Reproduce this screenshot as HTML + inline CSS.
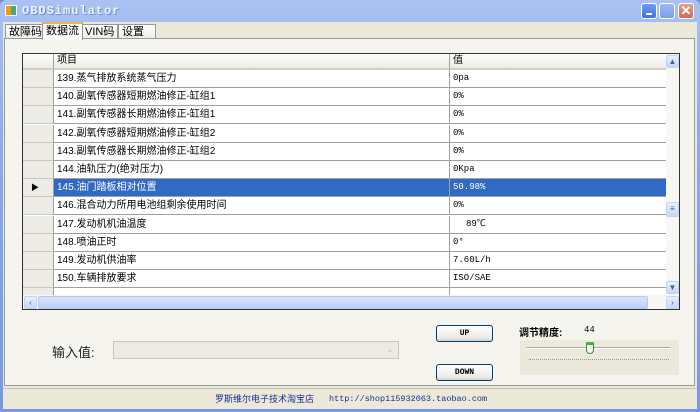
<!DOCTYPE html>
<html><head><meta charset="utf-8"><style>
*{margin:0;padding:0;box-sizing:border-box}
body{width:700px;height:412px;overflow:hidden;background:#6b8fd8;font-family:"Liberation Sans","Noto Sans CJK SC",sans-serif;position:relative}
.win{position:absolute;left:0;top:0;width:700px;height:412px;background:linear-gradient(#a9c2f2,#8eaeee 30%,#7d9fe8 70%,#7899e0);border-radius:6px 6px 0 0}
.title{position:absolute;left:22px;top:4px;color:#eef3ff;font:bold 12px "Liberation Mono",monospace;letter-spacing:1px;text-shadow:1px 1px #6d8bd0}
.ico{position:absolute;left:5px;top:5px;width:12px;height:11px;background:linear-gradient(90deg,#f90 50%,#4a8 50%);border:1px solid #fff}
.tb{position:absolute;top:3px;width:16px;height:16px;border:1px solid #fff;border-radius:3px}
.client{position:absolute;left:3px;top:22px;width:694px;height:387px;background:#ece9d8}
.tabs{position:absolute;left:0;top:0;height:16px;width:694px}
.tab{position:absolute;top:2px;height:15px;border:1px solid #919b9c;border-bottom:none;background:linear-gradient(#fff,#ecebe6);font-size:11px;padding:0 3px;line-height:14px;color:#000}
.page{position:absolute;left:1px;top:16px;width:691px;height:348px;background:#f5f4ef;border:1px solid #919b9c}
.grid{position:absolute;left:17px;top:14px;width:658px;height:257px;border:1px solid #333;background:#fff;overflow:hidden}
.row{position:absolute;left:0;height:18px;width:643px;font-size:10px;line-height:17px}
.rh{position:absolute;left:0;top:0;width:31px;height:18px;background:#ecebe6;border-right:1px solid #a0a0a0;border-bottom:1px solid #c8c8c0}
.c1{position:absolute;left:31px;top:0;width:396px;height:18px;border-right:1px solid #a0a0a0;border-bottom:1px solid #a0a0a0;padding-left:3px}
.c2{position:absolute;left:427px;top:0;width:216px;height:18px;border-bottom:1px solid #a0a0a0;padding-left:3px;font-family:"Liberation Mono","Noto Sans CJK SC",monospace;font-size:9px}
.hdr .c1,.hdr .c2,.hdr .rh{background:linear-gradient(#fff,#ecebe6);border-bottom:2px solid #d0cfc7}
.hdr .c2{font-family:"Liberation Sans","Noto Sans CJK SC",sans-serif;font-size:10px}
.sel .c1,.sel .c2{background:#316ac5;color:#fff}
.vs{position:absolute;left:643px;top:0;width:14px;height:241px;background:#f7f7f3}
.hs{position:absolute;left:0;top:241px;width:657px;height:15px;background:#f7f7f3}
.sb{position:absolute;width:13px;height:13px;background:linear-gradient(#e8effd,#c6d7fa);border:1px solid #c3d3f3;border-radius:2px;font-size:8px;color:#4d6185;text-align:center;line-height:11px}
.btn{position:absolute;width:57px;height:17px;border:1px solid #003c74;border-radius:3px;background:linear-gradient(#fff,#ecebe6 80%,#d6d0c5);font:bold 8px "Liberation Mono",monospace;text-align:center;line-height:15px}
.status{position:absolute;left:0;top:366px;width:694px;height:21px;border-top:1px solid #c5c2b2;font-size:9px;color:#1a2a9a;line-height:20px}
</style></head><body>
<div class="win">
<div class="ico"></div><div class="title">OBDSimulator</div>
<div class="tb" style="left:641px;background:linear-gradient(#6d9cf2,#4173e0)"><div style="position:absolute;left:4px;top:9px;width:6px;height:2px;background:#fff"></div></div>
<div class="tb" style="left:659px;background:linear-gradient(#9dbaf3,#7e9fe8)"></div>
<div class="tb" style="left:678px;background:linear-gradient(#e9a08a,#d16a50);color:#fff;font:bold 13px sans-serif;text-align:center;line-height:14px">✕</div>
<div class="client">
<div class="tabs">
<div class="tab" style="left:2px">故障码</div>
<div class="tab" style="left:39px;top:0;height:18px;background:#fcfcfe;border-top:2px solid #f6b23a;z-index:2">数据流</div>
<div class="tab" style="left:78px">VIN码</div>
<div class="tab" style="left:115px;width:38px">设置</div>
</div>
<div class="page">
<div class="grid">
<div class="row hdr" style="top:0;height:16px"><div class="rh" style="height:16px"></div><div class="c1" style="height:16px;line-height:14px">项目</div><div class="c2" style="height:16px;line-height:14px">值</div></div>
<div class="row" style="top:16px"><div class="rh"></div><div class="c1">139.蒸气排放系统蒸气压力</div><div class="c2">0pa</div></div>
<div class="row" style="top:34.2px"><div class="rh"></div><div class="c1">140.副氧传感器短期燃油修正-缸组1</div><div class="c2">0%</div></div>
<div class="row" style="top:52.4px"><div class="rh"></div><div class="c1">141.副氧传感器长期燃油修正-缸组1</div><div class="c2">0%</div></div>
<div class="row" style="top:70.6px"><div class="rh"></div><div class="c1">142.副氧传感器短期燃油修正-缸组2</div><div class="c2">0%</div></div>
<div class="row" style="top:88.8px"><div class="rh"></div><div class="c1">143.副氧传感器长期燃油修正-缸组2</div><div class="c2">0%</div></div>
<div class="row" style="top:107px"><div class="rh"></div><div class="c1">144.油轨压力(绝对压力)</div><div class="c2">0Kpa</div></div>
<div class="row sel" style="top:125.2px"><div class="rh" style="font-size:8px;padding-left:8px">▶</div><div class="c1">145.油门踏板相对位置</div><div class="c2">50.98%</div></div>
<div class="row" style="top:143.4px"><div class="rh"></div><div class="c1">146.混合动力所用电池组剩余使用时间</div><div class="c2">0%</div></div>
<div class="row" style="top:161.6px"><div class="rh"></div><div class="c1">147.发动机机油温度</div><div class="c2" style="padding-left:16px">89℃</div></div>
<div class="row" style="top:179.8px"><div class="rh"></div><div class="c1">148.喷油正时</div><div class="c2">0°</div></div>
<div class="row" style="top:198px"><div class="rh"></div><div class="c1">149.发动机供油率</div><div class="c2">7.60L/h</div></div>
<div class="row" style="top:216.2px"><div class="rh"></div><div class="c1">150.车辆排放要求</div><div class="c2">ISO/SAE</div></div>
<div class="row" style="top:234.4px"><div class="rh"></div><div class="c1"></div><div class="c2"></div></div>
<div class="vs"><div class="sb" style="left:0;top:1px">▲</div><div class="sb" style="left:0;top:148px;height:15px">≡</div><div class="sb" style="left:0;top:227px">▼</div></div>
<div class="hs"><div class="sb" style="left:1px;top:1px">‹</div><div style="position:absolute;left:15px;top:1px;width:610px;height:13px;background:linear-gradient(#d6e2fa,#bfd2f7);border:1px solid #b6c9ef;border-radius:2px"></div><div class="sb" style="left:643px;top:1px">›</div></div>
</div>
<div style="position:absolute;left:47px;top:303px;font-size:13px;color:#222">输入值:</div>
<div style="position:absolute;left:108px;top:302px;width:286px;height:18px;background:#ecebe3;border:1px solid #c9c7ba"><div style="position:absolute;right:1px;top:1px;width:14px;height:14px;color:#bbb;font-size:8px;text-align:center;line-height:14px">⌄</div></div>
<div class="btn" style="left:431px;top:286px">UP</div>
<div class="btn" style="left:431px;top:325px">DOWN</div>
<div style="position:absolute;left:514px;top:285px;font-size:10px;font-weight:bold">调节精度:</div>
<div style="position:absolute;left:579px;top:286px;font:9px 'Liberation Mono',monospace">44</div>
<div style="position:absolute;left:515px;top:301px;width:159px;height:35px;background:#ebe9dc">
<div style="position:absolute;left:6px;top:7px;width:145px;height:2px;background:#fff;border-top:1px solid #aaa"></div>
<div style="position:absolute;left:9px;top:19px;width:140px;height:2px;border-top:1px dotted #999"></div>
<div style="position:absolute;left:66px;top:2px;width:8px;height:12px;background:#f5f5f0;border:1px solid #3a8a3a;border-top:3px solid #3dba3d;border-radius:1px 1px 4px 4px"></div>
</div>
</div>
<div class="status"><span style="position:absolute;left:212px">罗斯维尔电子技术淘宝店</span><span style="position:absolute;left:326px;font-family:'Liberation Mono',monospace;font-size:8.5px">http://shop115932063.taobao.com</span></div>
</div>
</div>
</body></html>
